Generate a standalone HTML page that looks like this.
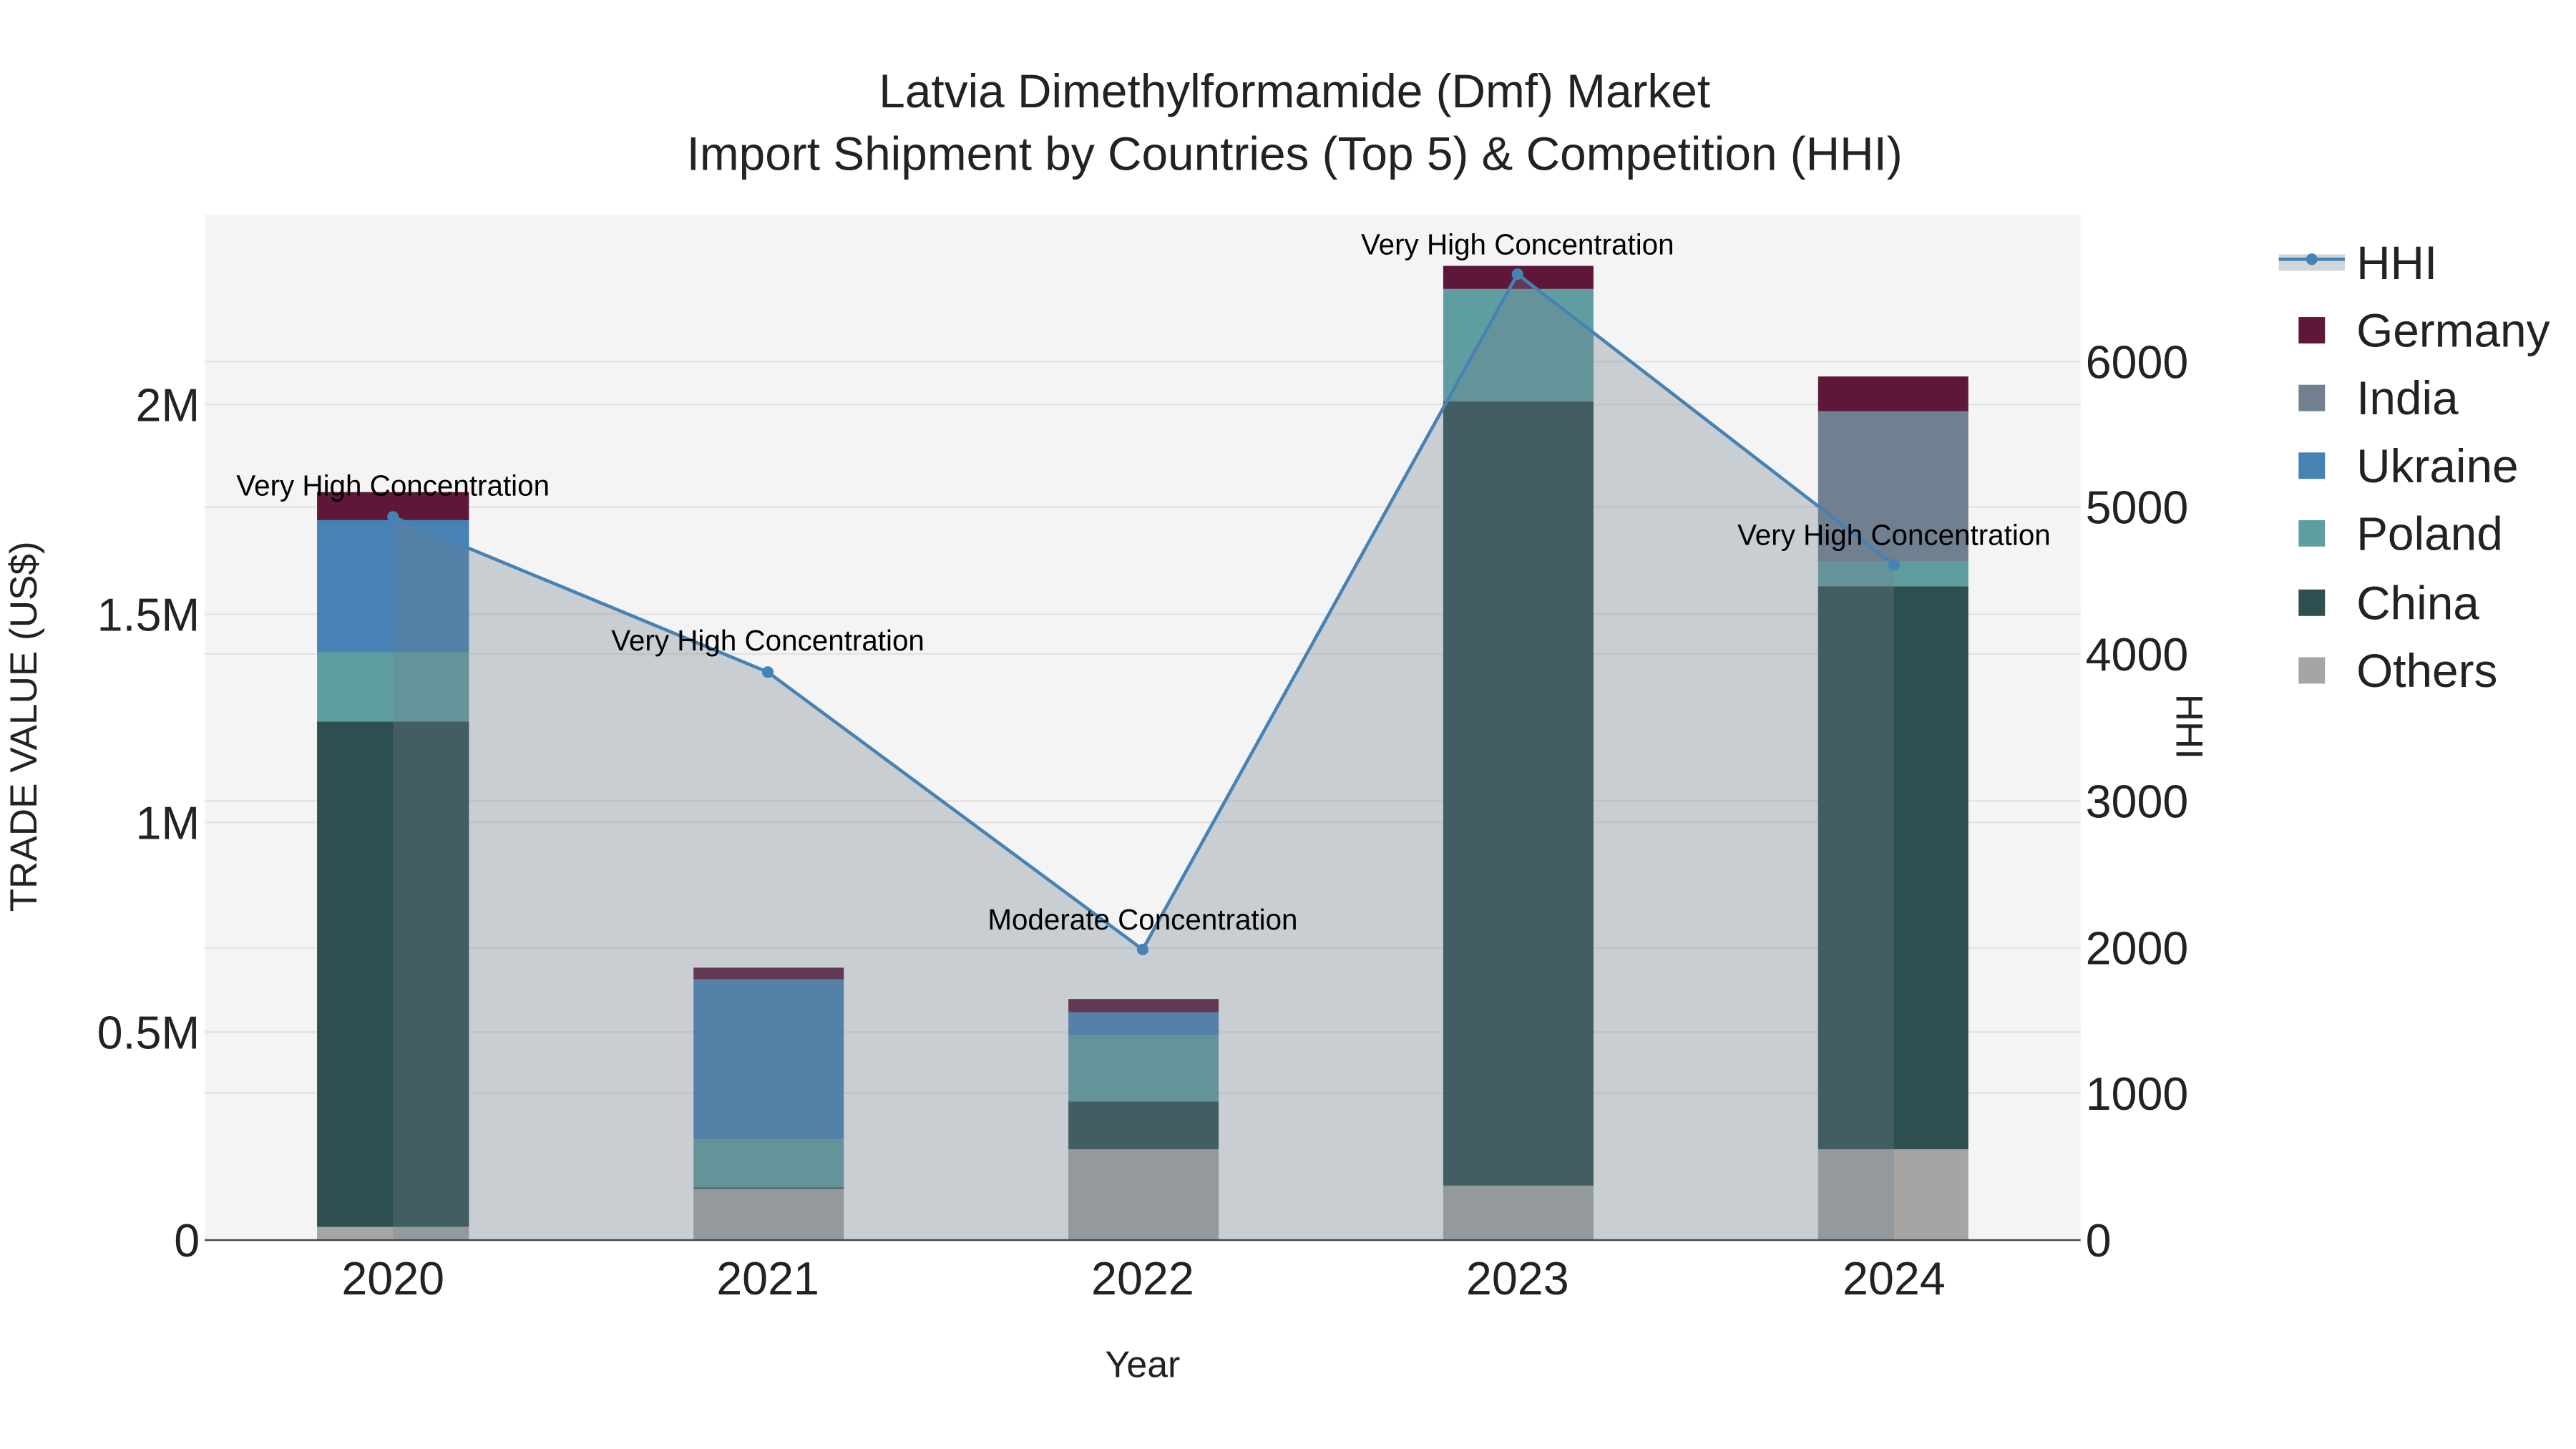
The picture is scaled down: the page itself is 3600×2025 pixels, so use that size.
<!DOCTYPE html>
<html><head><meta charset="utf-8"><style>html,body{margin:0;padding:0;background:#fff}svg{display:block}</style></head>
<body>
<svg width="3600" height="2025" viewBox="0 0 1560 877.5" xmlns="http://www.w3.org/2000/svg" font-family="Liberation Sans, Arial, sans-serif">
<rect width="1560" height="877.5" fill="#fff"/>
<rect x="124" y="130" width="1136" height="621" fill="#f4f4f4"/>
<g stroke="#e2e2e2" stroke-width="1">
<line x1="124" x2="1260" y1="625" y2="625"/><line x1="124" x2="1260" y1="498" y2="498"/><line x1="124" x2="1260" y1="372" y2="372"/><line x1="124" x2="1260" y1="245" y2="245"/>
<line x1="124" x2="1260" y1="662" y2="662"/><line x1="124" x2="1260" y1="574" y2="574"/><line x1="124" x2="1260" y1="485" y2="485"/><line x1="124" x2="1260" y1="396" y2="396"/><line x1="124" x2="1260" y1="307" y2="307"/><line x1="124" x2="1260" y1="219" y2="219"/>
</g>
<g>
<rect x="192" y="743" width="92" height="8" fill="#a5a5a5"/><rect x="192" y="437" width="92" height="306" fill="#2e4f4f"/><rect x="192" y="395" width="92" height="42" fill="#5f9ea0"/><rect x="192" y="315" width="92" height="80" fill="#4682b4"/><rect x="192" y="298" width="92" height="17" fill="#5e1738"/>
<rect x="420" y="720" width="91" height="31" fill="#a5a5a5"/><rect x="420" y="719" width="91" height="1" fill="#2e4f4f"/><rect x="420" y="690" width="91" height="29" fill="#5f9ea0"/><rect x="420" y="593" width="91" height="97" fill="#4682b4"/><rect x="420" y="586" width="91" height="7" fill="#5e1738"/>
<rect x="647" y="696" width="91" height="55" fill="#a5a5a5"/><rect x="647" y="667" width="91" height="29" fill="#2e4f4f"/><rect x="647" y="627" width="91" height="40" fill="#5f9ea0"/><rect x="647" y="613" width="91" height="14" fill="#4682b4"/><rect x="647" y="605" width="91" height="8" fill="#5e1738"/>
<rect x="874" y="718" width="91" height="33" fill="#a5a5a5"/><rect x="874" y="243" width="91" height="475" fill="#2e4f4f"/><rect x="874" y="175" width="91" height="68" fill="#5f9ea0"/><rect x="874" y="161" width="91" height="14" fill="#5e1738"/>
<rect x="1101" y="696" width="91" height="55" fill="#a5a5a5"/><rect x="1101" y="355" width="91" height="341" fill="#2e4f4f"/><rect x="1101" y="340" width="91" height="15" fill="#5f9ea0"/><rect x="1101" y="249" width="91" height="91" fill="#708090"/><rect x="1101" y="228" width="91" height="21" fill="#5e1738"/>
</g>
<polygon points="238,751 238,313 465,407 692,575 919,166 1147,342 1147,751" fill="rgba(112,128,144,0.32)"/>
<line x1="124" x2="1260" y1="751" y2="751" stroke="#444" stroke-width="1"/>
<polyline points="238,313 465,407 692,575 919,166 1147,342" fill="none" stroke="#4682b4" stroke-width="2"/>
<g fill="#4682b4"><circle cx="238" cy="313" r="3.5"/><circle cx="465" cy="407" r="3.5"/><circle cx="692" cy="575" r="3.5"/><circle cx="919" cy="166" r="3.5"/><circle cx="1147" cy="342" r="3.5"/></g>
<g font-size="17.5" fill="#000" text-anchor="middle">
<text x="238" y="300">Very High Concentration</text><text x="465" y="394">Very High Concentration</text><text x="692" y="563">Moderate Concentration</text><text x="919" y="154">Very High Concentration</text><text x="1147" y="330">Very High Concentration</text>
</g>
<g font-size="28" fill="#222" text-anchor="end">
<text x="121" y="761">0</text><text x="121" y="635">0.5M</text><text x="121" y="508">1M</text><text x="121" y="382">1.5M</text><text x="121" y="255">2M</text>
</g>
<g font-size="28" fill="#222" text-anchor="start">
<text x="1263" y="761">0</text><text x="1263" y="672">1000</text><text x="1263" y="584">2000</text><text x="1263" y="495">3000</text><text x="1263" y="406">4000</text><text x="1263" y="317">5000</text><text x="1263" y="229">6000</text>
</g>
<g font-size="28" fill="#222" text-anchor="middle">
<text x="238" y="784">2020</text><text x="465" y="784">2021</text><text x="692" y="784">2022</text><text x="919" y="784">2023</text><text x="1147" y="784">2024</text>
</g>
<text x="692" y="834" font-size="22.5" fill="#222" text-anchor="middle">Year</text>
<text transform="translate(22,440) rotate(-90)" font-size="23" fill="#222" text-anchor="middle">TRADE VALUE (US$)</text>
<text transform="translate(1318,440) rotate(90)" font-size="23" fill="#222" text-anchor="middle">HHI</text>
<text x="784" y="65" font-size="28.5" fill="#222" text-anchor="middle">Latvia Dimethylformamide (Dmf) Market</text>
<text x="784" y="103" font-size="28.5" fill="#222" text-anchor="middle">Import Shipment by Countries (Top 5) &amp; Competition (HHI)</text>
<rect x="1380" y="154" width="40" height="10" fill="rgba(112,128,144,0.32)"/>
<line x1="1380" x2="1420" y1="157" y2="157" stroke="#4682b4" stroke-width="2"/><circle cx="1400" cy="157" r="3.5" fill="#4682b4"/>
<g><rect x="1392" y="192" width="16" height="16" fill="#5e1738"/><rect x="1392" y="233" width="16" height="16" fill="#708090"/><rect x="1392" y="274" width="16" height="16" fill="#4682b4"/><rect x="1392" y="315" width="16" height="16" fill="#5f9ea0"/><rect x="1392" y="357" width="16" height="16" fill="#2e4f4f"/><rect x="1392" y="398" width="16" height="16" fill="#a5a5a5"/></g>
<g font-size="28.5" fill="#222">
<text x="1427" y="169">HHI</text><text x="1427" y="210">Germany</text><text x="1427" y="251">India</text><text x="1427" y="292">Ukraine</text><text x="1427" y="333">Poland</text><text x="1427" y="375">China</text><text x="1427" y="416">Others</text>
</g>
</svg>
</body></html>
